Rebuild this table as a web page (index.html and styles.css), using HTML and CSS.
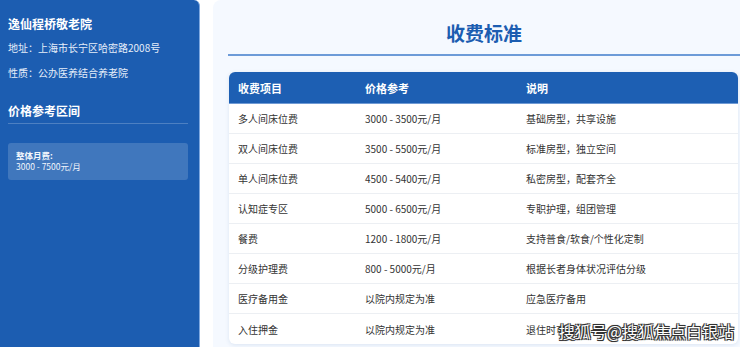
FILE: index.html
```html
<!DOCTYPE html>
<html lang="zh-CN">
<head>
<meta charset="utf-8">
<title>收费标准</title>
<link rel="stylesheet" href="styles.css">
</head>
<body>
<aside class="sidebar">
  <h2 class="side-title">逸仙程桥敬老院</h2>
  <p class="side-info">地址：上海市长宁区哈密路2008号</p>
  <p class="side-info">性质：公办医养结合养老院</p>
  <h3 class="side-sub">价格参考区间</h3>
  <div class="range-box">
    <div class="range-label">整体月费:</div>
    <div class="range-value">3000 - 7500元/月</div>
  </div>
</aside>
<main class="main">
  <h1 class="page-title">收费标准</h1>
  <table class="fee-table">
    <colgroup>
      <col class="c1"><col class="c2"><col class="c3">
    </colgroup>
    <thead>
      <tr><th>收费项目</th><th>价格参考</th><th>说明</th></tr>
    </thead>
    <tbody>
      <tr><td>多人间床位费</td><td>3000 - 3500元/月</td><td>基础房型，共享设施</td></tr>
      <tr><td>双人间床位费</td><td>3500 - 5500元/月</td><td>标准房型，独立空间</td></tr>
      <tr><td>单人间床位费</td><td>4500 - 5400元/月</td><td>私密房型，配套齐全</td></tr>
      <tr><td>认知症专区</td><td>5000 - 6500元/月</td><td>专职护理，组团管理</td></tr>
      <tr><td>餐费</td><td>1200 - 1800元/月</td><td>支持普食/软食/个性化定制</td></tr>
      <tr><td>分级护理费</td><td>800 - 5000元/月</td><td>根据长者身体状况评估分级</td></tr>
      <tr><td>医疗备用金</td><td>以院内规定为准</td><td>应急医疗备用</td></tr>
      <tr class="last"><td>入住押金</td><td>以院内规定为准</td><td>退住时可退还</td></tr>
    </tbody>
  </table>
</main>
<div class="watermark">搜狐号@搜狐焦点白银站</div>
</body>
</html>
```

FILE: styles.css
```css
* { box-sizing: border-box; }

html, body {
  margin: 0;
  padding: 0;
  height: 347px;
  overflow: hidden;
}

body {
  display: flex;
  align-items: stretch;
  background: #ffffff;
  font-family: "Noto Sans CJK SC", "Noto Sans", sans-serif;
  color: #333333;
  position: relative;
}

.sidebar {
  flex: 0 0 200px;
  width: 200px;
  background: #1c5db1;
  border-right: 1px solid #7fa8e0;
  border-top-right-radius: 6px;
  padding: 16px 11px 0 8px;
  color: #ffffff;
}

.side-title {
  margin: 0 0 8px;
  font-size: 12px;
  line-height: 16px;
  font-weight: 700;
}

.side-info {
  margin: 0 0 9px;
  font-size: 10px;
  line-height: 16px;
  color: #e6eefa;
}

.side-sub {
  margin: 22px 0 0;
  font-size: 12px;
  line-height: 16px;
  font-weight: 700;
  padding-bottom: 4px;
  border-bottom: 1px solid rgba(255, 255, 255, 0.22);
}

.range-box {
  margin-top: 19px;
  background: rgba(255, 255, 255, 0.16);
  border-radius: 3px;
  padding: 7px 8px 8px;
  font-size: 8.5px;
  line-height: 11px;
  color: #f2f6fc;
}

.range-label {
  font-weight: 700;
}

.main {
  flex: 1 1 auto;
  margin-left: 13px;
  background: #f5f9ff;
  border-top-left-radius: 8px;
  padding: 20px 2px 0 16px;
  min-width: 0;
}

.page-title {
  margin: 0;
  font-size: 19px;
  line-height: 26px;
  font-weight: 700;
  text-align: center;
  color: #1c5db1;
  padding-bottom: 8px;
  border-bottom: 2px solid #6d9bd8;
  margin-left: -1px;
  margin-right: -2px;
}

.fee-table {
  margin-top: 16px;
  width: 509px;
  table-layout: fixed;
  border-collapse: separate;
  border-spacing: 0;
  background: #ffffff;
  border-radius: 6px;
  overflow: hidden;
  box-shadow: 0 1px 4px rgba(30, 80, 150, 0.12);
}

.c1 { width: 127px; }
.c2 { width: 161px; }
.c3 { width: 221px; }

.fee-table th {
  height: 32px;
  padding: 0 9px;
  text-align: left;
  background: #1d5fb3;
  color: #ffffff;
  font-size: 11px;
  font-weight: 700;
  border-bottom: 1px solid #6f9ad4;
}

.fee-table td {
  height: 30px;
  padding: 0 9px;
  font-size: 10px;
  color: #333333;
  border-bottom: 1px solid #eceff3;
  white-space: nowrap;
}

.fee-table tr.last td {
  border-bottom: none;
}

.watermark {
  position: absolute;
  right: 6px;
  bottom: 5px;
  font-size: 16px;
  line-height: 22px;
  color: #ffffff;
  font-family: "Noto Sans CJK SC", sans-serif;
  text-shadow: -1px -1px 0 #333, 1px -1px 0 #333, -1px 1px 0 #333, 1px 1px 0 #333, 0 0 2px #000;
}
```
